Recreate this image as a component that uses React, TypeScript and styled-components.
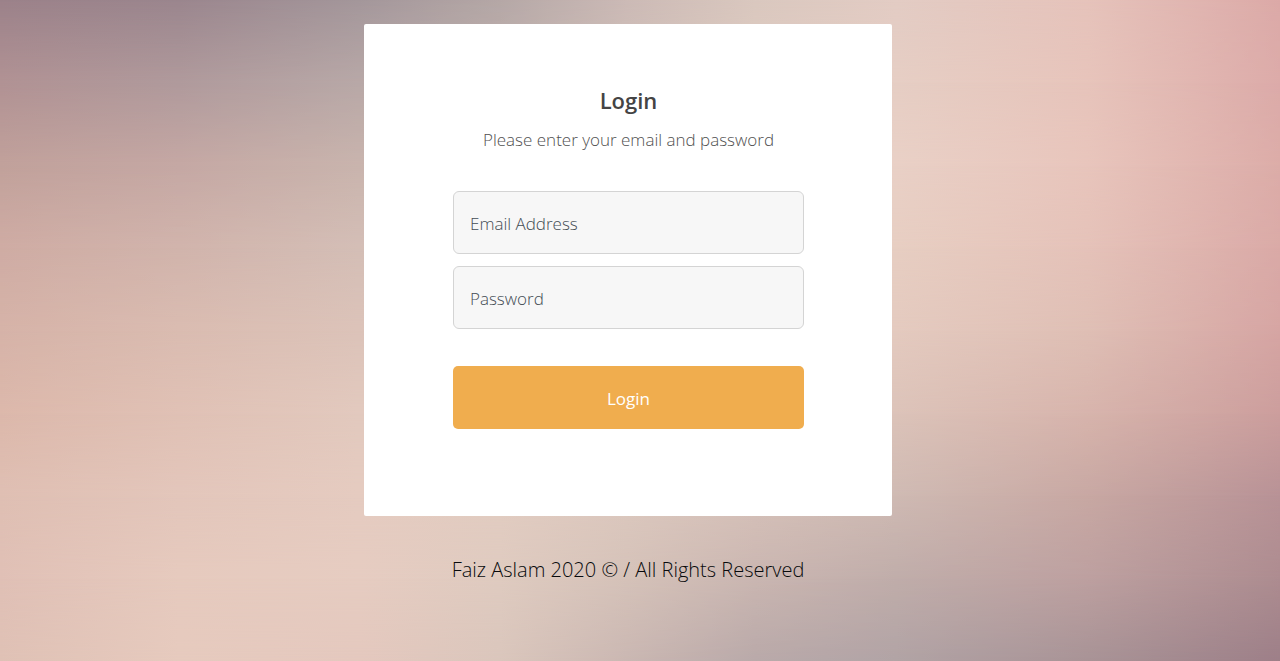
import React from "react";
import styled, { createGlobalStyle } from "styled-components";

const GlobalStyle = createGlobalStyle`
  *, *::before, *::after { box-sizing: border-box; }
  body {
    margin: 0;
    font-family: "Open Sans", "Noto Sans", sans-serif;
    font-size: 17px;
    font-weight: 300;
    line-height: 24px;
    color: #080a0c;
  }
`;

/* Soft colour field: each band runs left to right and fades in over the one above. */
const stops = [0, 14, 28, 39, 49, 59, 70, 85, 100];
const bands = [
  ["#9c828a", "#9b868e", "#a4979b", "#b5a8a7", "#ccbab6", "#dac8bf", "#e3ccc4", "#e6c3bb", "#dcaaa8"],
  ["#b19294", "#b09a9c", "#b8a8a7", "#c0b0ac", "#d0c0b8", "#dfcbc1", "#e6cec4", "#e7c4bb", "#dcaba9"],
  ["#c1a19b", "#c5a8a4", "#c9b4ad", "#d0bdb5", "#dac7bd", "#e3cdc2", "#e9d0c6", "#e8c5bc", "#dcaca8"],
  ["#cfaca4", "#d1b4ac", "#d4beb6", "#dac4ba", "#dfcabf", "#e4cec3", "#e7cec2", "#e5c2b9", "#daaaa7"],
  ["#d6b3a8", "#dabcb1", "#dcc3b9", "#e0c8bd", "#e3cbc0", "#e4cbc0", "#e4cabf", "#dfbfb5", "#d6a5a3"],
  ["#dcb8ab", "#e0c1b5", "#e2c9be", "#e2cabf", "#e0cabe", "#dec8bd", "#dcc3b9", "#d7b4ac", "#cc9e9d"],
  ["#dfbfb3", "#e3c6bb", "#e5cbc0", "#e2ccc1", "#dcc8be", "#d6c1b9", "#cfbab3", "#c8a8a3", "#b89296"],
  ["#e0c0b6", "#e6cabe", "#e6ccc1", "#dfcbc0", "#d5c2b9", "#cab6b1", "#c0adaa", "#bda0a0", "#ad8c90"],
  ["#dfc1b5", "#e6cabe", "#e4c8be", "#dac6bc", "#cab7b2", "#b9a9a9", "#b1a3a5", "#a89396", "#9d7f88"],
];

const Screen = styled.div`
  display: grid;
  min-height: 100vh;
`;

const Band = styled.div<{ $index: number; $colors: string[] }>`
  grid-area: 1 / 1;
  background: linear-gradient(to right, ${(p) => p.$colors.map((color, i) => `${color} ${stops[i]}%`).join(", ")});
  mask-image: ${(p) => {
    const step = 100 / (bands.length - 1);
    return p.$index === 0
      ? "none"
      : `linear-gradient(to bottom, transparent ${(p.$index - 1) * step}%, black ${p.$index * step}%)`;
  }};
`;

const Page = styled.div`
  grid-area: 1 / 1;
  z-index: 1;
  display: flex;
  flex-direction: column;
  align-items: center;
  padding: 24px 24px 24px 0;
`;

const Card = styled.main`
  width: 100%;
  max-width: 528px;
  padding: 62px 88px 87px 89px;
  border-radius: 2px;
  background: #fff;
  text-align: center;
`;

const Title = styled.h1`
  margin: 0 0 14px;
  font-size: 22px;
  font-weight: 600;
  line-height: 28px;
  color: #444;
`;

const Subtitle = styled.p`
  margin: 0 0 39px;
  color: #505050;
`;

const Form = styled.form`
  display: flex;
  flex-direction: column;
  gap: 12px;
`;

const Field = styled.input`
  width: 100%;
  height: 63px;
  padding: 2px 16px 0;
  border: 1px solid #d4d4d4;
  border-radius: 6px;
  background: #f7f7f7;
  font: inherit;
  color: #495057;
  &::placeholder {
    color: #434c54;
    opacity: 1;
  }
`;

const SubmitButton = styled.button`
  width: 100%;
  height: 63px;
  margin-top: 25px;
  padding: 2px 16px 0;
  border: 0;
  border-radius: 5px;
  background: #f0ad4e;
  font: inherit;
  font-weight: 400;
  color: #fff;
  cursor: pointer;
`;

const Footer = styled.footer`
  padding-top: 40px;
  font-size: 20px;
  line-height: 28px;
  text-align: center;
`;

export default function App() {
  return (
    <>
      <GlobalStyle />
      <Screen>
        {bands.map((colors, index) => (
          <Band key={index} $index={index} $colors={colors} />
        ))}
        <Page>
          <Card>
            <Title>Login</Title>
            <Subtitle>Please enter your email and password</Subtitle>
            <Form onSubmit={(event) => event.preventDefault()}>
              <Field type="email" name="email" placeholder="Email Address" aria-label="Email Address" />
              <Field type="password" name="password" placeholder="Password" aria-label="Password" />
              <SubmitButton type="submit">Login</SubmitButton>
            </Form>
          </Card>
          <Footer>Faiz Aslam 2020 © / All Rights Reserved</Footer>
        </Page>
      </Screen>
    </>
  );
}
